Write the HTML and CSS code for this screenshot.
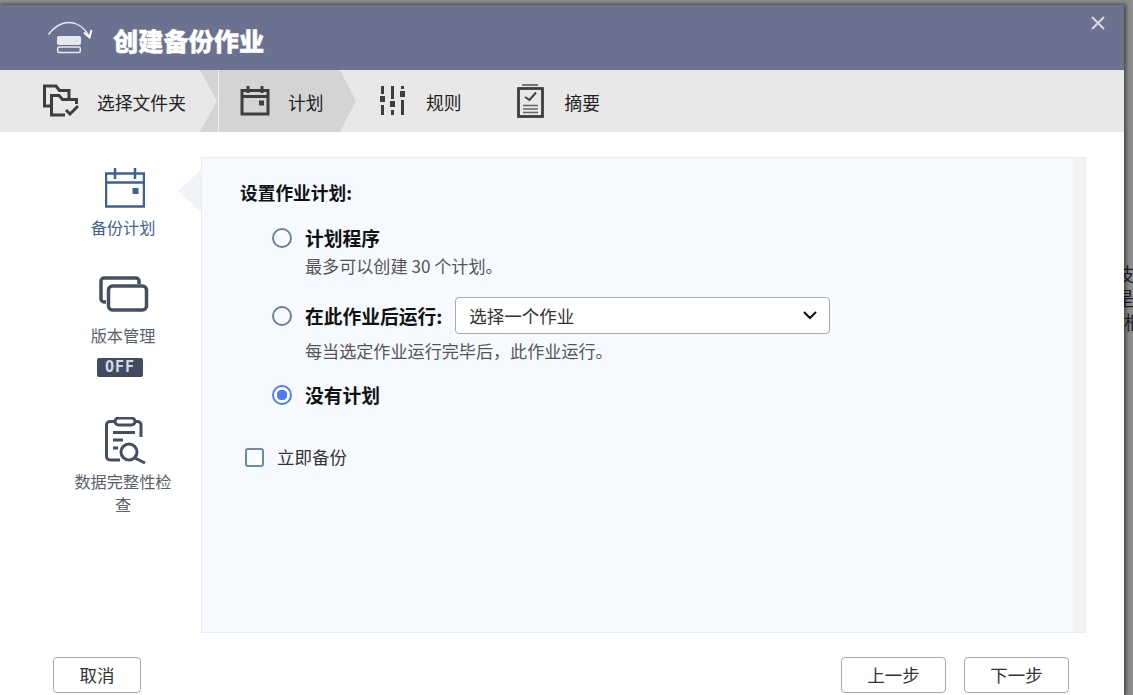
FILE: index.html
```html
<!DOCTYPE html>
<html lang="zh-CN">
<head>
<meta charset="utf-8">
<title>创建备份作业</title>
<link rel="stylesheet" href="styles.css">
</head>
<body>
<div class="backdrop"><div class="backdrop-text">技<br>是<br><span class="backdrop-shift">框</span></div></div>
<main class="dialog">
  <header class="head">
    <svg class="head-icon" width="46" height="34" viewBox="0 0 46 34">
      <path class="w15" d="M1.500 13.500C8 5 15 1.500 21.500 1.500C29 1.500 37 6 42 15"/>
      <path class="w2" d="M37 11.500 42.500 16.500 44.500 9"/>
      <rect class="wfill" x="10" y="15" width="24" height="9" rx="2"/>
      <rect class="w15" x="10.700" y="26" width="22.600" height="5.500" rx="1.500"/>
      <circle cx="29.500" cy="20" r="1" fill="#6b7290"/>
    </svg>
    <h1 class="head-title">创建备份作业</h1>
    <svg class="close" width="14" height="14" viewBox="0 0 14 14"><path d="M1 1 13 13M13 1 1 13"/></svg>
  </header>

  <nav class="steps">
    <div class="step step-first">
      <svg class="ico" width="36" height="34" viewBox="0 0 36 34">
        <path d="M8 22H1.500V2H13L16.500 6.500H26V14"/>
        <path d="M22 31H8.500V11.500H16L19.500 15.500H33.500V20"/>
        <path d="M23 26 27 30 35 22"/>
      </svg>
      <span>选择文件夹</span>
    </div>
    <div class="step step-active">
      <svg class="ico" width="30" height="30" viewBox="0 0 30 30">
        <path d="M2 4.500H28V28H2ZM2 10.500H28M8 0V7M22 0V7"/>
        <rect class="solid" x="19" y="14.500" width="5" height="5"/>
      </svg>
      <span>计划</span>
    </div>
    <div class="step step-rules">
      <svg class="ico" width="26" height="30" viewBox="0 0 26 30">
        <path d="M2.500 0V8M2.500 19V29M12.500 0V13M12.500 24V29M22.500 0V3M22.500 14V29"/>
        <rect class="solid" x="0" y="10" width="5" height="6"/>
        <rect class="solid" x="10" y="15" width="5" height="6"/>
        <rect class="solid" x="20" y="5" width="5" height="6"/>
      </svg>
      <span>规则</span>
    </div>
    <div class="step step-summary">
      <svg class="ico" width="27" height="34" viewBox="0 0 27 34">
        <path class="pale" d="M5 1H21"/>
        <rect class="mid" x="1.500" y="4.500" width="24" height="28"/>
        <path class="thin" d="M8 13 12.500 16 19 8.500"/>
        <path class="hair" d="M6 21.500H21M6 25H21M6 28.500H21"/>
      </svg>
      <span>摘要</span>
    </div>
  </nav>

  <div class="content">
    <aside class="side">
      <div class="side-item side-current">
        <svg class="cal" width="40" height="40" viewBox="0 0 40 40">
          <path d="M1 5.500H39V38.500H1ZM1 14.500H39M10 0V11M30 0V11"/>
          <rect x="27.500" y="20" width="6" height="6"/>
        </svg>
        <span>备份计划</span>
      </div>
      <div class="side-item side-version">
        <svg class="stack" width="50" height="36" viewBox="0 0 50 36">
          <path d="M7 26H5A3 3 0 0 1 2 23V5A3 3 0 0 1 5 2H37A3 3 0 0 1 40 5V8"/>
          <rect x="9.500" y="10" width="38" height="24" rx="4"/>
        </svg>
        <span>版本管理</span>
        <b class="off">OFF</b>
      </div>
      <div class="side-item side-check">
        <svg class="check" width="42" height="47" viewBox="0 0 42 47">
          <path d="M10 4.500H5A3.500 3.500 0 0 0 1.500 8V39.500A3.500 3.500 0 0 0 5 43H15M30 4.500H32.500A3.500 3.500 0 0 1 36 8V20"/>
          <rect x="10" y="1" width="20" height="7" rx="3.500"/>
          <path d="M8 15.500H30M8 23H18M8 31H13"/>
          <circle cx="24" cy="35" r="8"/>
          <path d="M30 41 40 46"/>
        </svg>
        <span>数据完整性检查</span>
      </div>
    </aside>

    <section class="panel">
      <div class="panel-main">
        <h2 class="panel-title">设置作业计划:</h2>
        <div class="options">
          <label class="opt opt-a">
            <input class="radio" type="radio" name="plan">
            <strong>计划程序</strong>
          </label>
          <p class="hint hint-a">最多可以创建 30 个计划。</p>
          <div class="opt opt-b">
            <label class="opt-label">
              <input class="radio" type="radio" name="plan">
              <strong>在此作业后运行:</strong>
            </label>
            <div class="select">
              <span>选择一个作业</span>
              <svg width="14" height="9" viewBox="0 0 14 9"><path d="M1 1 7 7 13 1"/></svg>
            </div>
          </div>
          <p class="hint hint-b">每当选定作业运行完毕后，此作业运行。</p>
          <label class="opt opt-c">
            <input class="radio" type="radio" name="plan" checked>
            <strong>没有计划</strong>
          </label>
        </div>
        <label class="now">
          <input class="box" type="checkbox">
          <span>立即备份</span>
        </label>
      </div>
      <div class="scrolltrack"></div>
    </section>
  </div>

  <footer class="foot">
    <button class="btn btn-cancel" type="button">取消</button>
    <div class="foot-right">
      <button class="btn" type="button">上一步</button>
      <button class="btn" type="button">下一步</button>
    </div>
  </footer>
</main>
</body>
</html>
```
FILE: styles.css
```css
* { box-sizing: border-box; }
html, body { margin: 0; height: 100%; }
body {
  position: relative;
  width: 1133px;
  height: 695px;
  overflow: hidden;
  background: #8e8e8e;
  font-family: "Noto Sans CJK SC", "Noto Sans", sans-serif;
  color: #222;
}
.backdrop {
  position: absolute;
  left: 1124px;
  top: 262px;
  width: 9px;
  height: 72px;
  overflow: hidden;
}
.backdrop-text {
  width: 30px;
  margin-left: -9px;
  font-size: 19px;
  line-height: 24px;
  color: #222;
}
.backdrop-shift { margin-left: 9px; }
.dialog {
  position: relative;
  width: 1124px;
  height: 690px;
  margin-top: 5px;
  display: flex;
  flex-direction: column;
  background: #fff;
  box-shadow: 1px 0 4px 1px rgba(0, 0, 0, .55);
}
.head {
  position: relative;
  height: 65px;
  flex: none;
  display: flex;
  align-items: center;
  padding-left: 47px;
  background: #6b7290;
}
.head-icon { margin-top: 1px; fill: none; stroke: #fff; flex: none; }
.head-icon .w15 { stroke-width: 1.500; stroke: #e8e9ee; }
.head-icon .w2 { stroke-width: 2; }
.head-icon .wfill { fill: #e8e9ee; stroke: none; }
.head-title {
  margin: 4px 0 0 20px;
  font-size: 25.200px;
  font-weight: 900;
  color: #fff;
  line-height: 34px;
  -webkit-text-stroke: .4px #fff;
}
.close {
  position: absolute;
  right: 19px;
  top: 11px;
  fill: none;
  stroke: #d8dbe4;
  stroke-width: 1.800;
}
.steps {
  height: 62px;
  flex: none;
  display: flex;
  background: #e8e8e8;
  font-size: 17.800px;
  color: #222;
}
.step { position: relative; display: flex; align-items: center; height: 100%; }
.step span { position: relative; margin-top: 2px; }
.ico { position: relative; fill: none; stroke: #3e3e3e; stroke-width: 3; flex: none; }
.ico .solid { fill: #3e3e3e; stroke: none; }
.ico .thin { stroke-width: 2; }
.ico .hair { stroke-width: 1.500; stroke: #666; }
.ico .pale { stroke-width: 2; stroke: #777; }
.ico .mid { stroke-width: 2.800; }
.step-first { width: 218px; padding-left: 43px; gap: 18px; background: #d4d4d4; }
.step-first::before {
  content: "";
  position: absolute;
  inset: 0;
  background: #e8e8e8;
  clip-path: polygon(0 0, 200px 0, 217px 50%, 200px 100%, 0 100%);
}
.step-active {
  width: 138px;
  padding-left: 21px;
  gap: 18px;
  background: #d4d4d4;
  border-left: 1px solid #f0f0f0;
  clip-path: polygon(0 0, 122px 0, 138px 50%, 122px 100%, 0 100%);
}
.step-rules { margin-left: 24px; gap: 20px; }
.step-summary { margin-left: 55px; gap: 21px; }
.content {
  flex: 1;
  display: flex;
  min-height: 0;
  padding: 25px 38px 0 0;
}
.side {
  width: 201px;
  flex: none;
  padding-left: 73px;
  padding-right: 28px;
  font-size: 16.200px;
  line-height: 23px;
  color: #5c6068;
}
.side-item { display: flex; flex-direction: column; align-items: center; text-align: center; }
.side-item span { width: 100px; }
.side-current { position: relative; padding-top: 11px; color: #3f6191; }
.side-current::after {
  content: "";
  position: absolute;
  left: 105px;
  top: 13px;
  width: 23px;
  height: 42px;
  background: #f1f3f7;
  clip-path: polygon(0 50%, 100% 0, 100% 100%);
}
.cal { fill: none; stroke: #3f6191; stroke-width: 2.500; margin: 0 0 8px 3px; }
.cal rect { fill: #3f6191; stroke: none; }
.side-version { padding-top: 37px; }
.stack { fill: none; stroke: #464f60; stroke-width: 3.500; margin: 0 0 12px 2px; }
.off {
  width: 46px;
  height: 19px;
  margin: 11px 0 0 -6px;
  border-radius: 2px;
  background: #434c5e;
  color: #d3d9e4;
  font-family: "DejaVu Sans Mono", monospace;
  font-size: 15px;
  line-height: 19px;
  letter-spacing: 1px;
}
.side-check { padding-top: 40px; }
.check { fill: none; stroke: #464f60; stroke-width: 3; margin: 0 0 6px 6px; }
.panel {
  flex: 1;
  display: flex;
  height: 476px;
  border: 1px solid #e9ebee;
  background: #f6faff;
}
.panel-main { flex: 1; padding-left: 38px; }
.scrolltrack { width: 11px; background: #f3f3f3; }
.panel-title {
  margin: 21px 0 0;
  font-size: 17.700px;
  line-height: 26px;
  font-weight: 700;
  color: #111;
}
.options { padding-left: 32px; margin-top: 20px; font-size: 17.500px; }
.opt, .opt-label { display: flex; align-items: center; gap: 13px; color: #111; }
.opt strong, .opt-label strong { font-size: 18.750px; font-weight: 700; line-height: 26px; }
.radio {
  appearance: none;
  width: 20px;
  height: 20px;
  margin: 0;
  flex: none;
  border: 2px solid #6d8299;
  border-radius: 50%;
  background: #f8fbff;
}
.radio:checked {
  border-color: #4f7cff;
  background: radial-gradient(circle, #4f7cff 0 5px, #fff 5.500px);
}
.hint { margin: 3px 0 0 33px; color: #555; font-size: 17.100px; line-height: 24px; }
.opt-b { margin-top: 19px; gap: 13px; }
.select {
  width: 375px;
  height: 37px;
  display: flex;
  align-items: center;
  justify-content: space-between;
  padding: 0 12px 0 13px;
  border: 1px solid #aaa;
  border-radius: 4px;
  background: #fff;
  color: #333;
}
.select svg { fill: none; stroke: #111; stroke-width: 2; }
.hint-b { margin-top: 5px; }
.opt-c { margin-top: 19px; }
.now {
  display: flex;
  align-items: center;
  gap: 13px;
  margin: 36px 0 0 5px;
  font-size: 17.500px;
  line-height: 26px;
  color: #333;
}
.box {
  appearance: none;
  width: 19px;
  height: 19px;
  margin: 0;
  border: 2px solid #6f8aa5;
  border-radius: 3px;
  background: #f8fbff;
}
.foot {
  flex: none;
  height: 60px;
  display: flex;
  justify-content: space-between;
  padding: 22px 55px 0 53px;
}
.foot-right { display: flex; gap: 18px; }
.btn {
  width: 105px;
  height: 36px;
  padding: 0;
  border: 1px solid #aaa;
  border-radius: 4px;
  background: #fff;
  color: #333;
  font-family: inherit;
  font-size: 17.500px;
  line-height: 34px;
}
.btn-cancel { width: 88px; }
```
